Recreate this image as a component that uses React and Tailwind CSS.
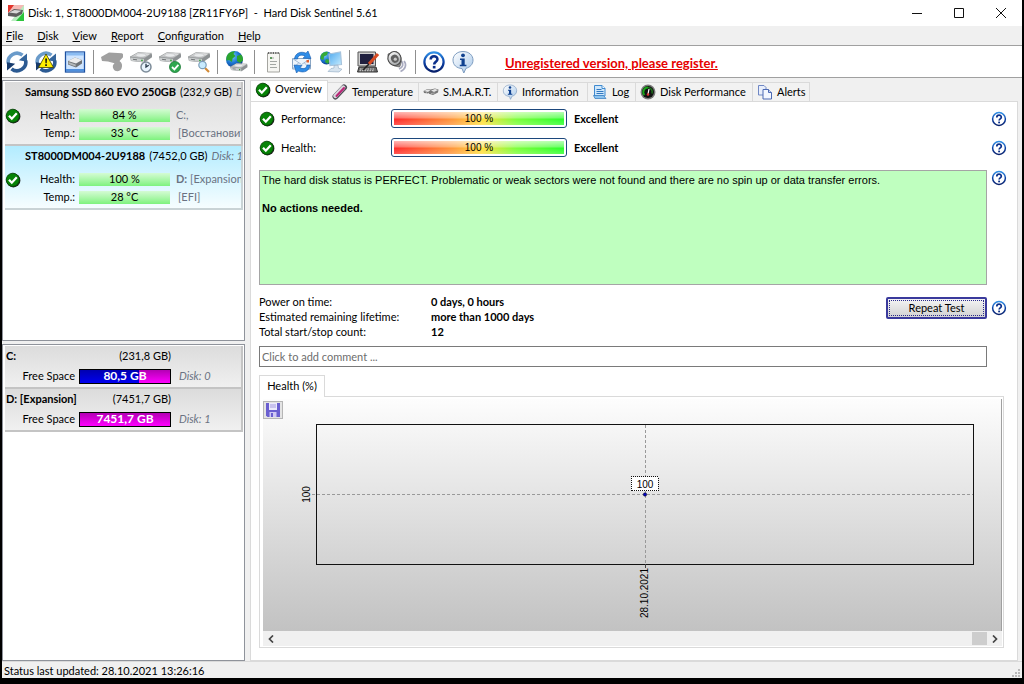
import React, { useState } from "react";

const GradientDefs = () => (
  <svg className="absolute h-0 w-0" aria-hidden="true">
    <defs>
      <linearGradient id="helpRing" x1="0" y1="0" x2="0" y2="1">
        <stop offset="0" stopColor="#2f8fe6" />
        <stop offset="0.5" stopColor="#0d43a8" />
        <stop offset="1" stopColor="#08206b" />
      </linearGradient>
      <linearGradient id="metal" x1="0" y1="0" x2="0" y2="1">
        <stop offset="0" stopColor="#f4f4f4" />
        <stop offset="1" stopColor="#a3a6a8" />
      </linearGradient>
      <radialGradient id="globe" cx="0.35" cy="0.3" r="0.8">
        <stop offset="0" stopColor="#7fd0ff" />
        <stop offset="0.5" stopColor="#1c77d2" />
        <stop offset="1" stopColor="#0a2f80" />
      </radialGradient>
      <linearGradient id="screen" x1="0" y1="0" x2="1" y2="1">
        <stop offset="0" stopColor="#4fa9ee" />
        <stop offset="1" stopColor="#c5ecff" />
      </linearGradient>
      <linearGradient id="balloon" x1="0" y1="0" x2="1" y2="1">
        <stop offset="0" stopColor="#ffffff" />
        <stop offset="1" stopColor="#a9c9ea" />
      </linearGradient>
    </defs>
  </svg>
);

const CheckIcon = () => (
  <svg viewBox="0 0 16 16" className="h-4 w-4 shrink-0">
    <circle cx="8.4" cy="8.4" r="7" fill="#222" />
    <circle cx="7.8" cy="7.8" r="6.600" fill="#078307" stroke="#043f04" strokeWidth="0.8" />
    <path d="M4 7.8l2.8 2.9 5-5.4" fill="none" stroke="#fff" strokeWidth="2.3" />
  </svg>
);

const HelpIcon = ({ className = "h-4 w-4" }) => (
  <svg viewBox="0 0 16 16" className={className}>
    <circle cx="8" cy="8" r="6.4" fill="#fff" stroke="url(#helpRing)" strokeWidth="1.5" />
    <path d="M5.8 6.4c0-3 4.5-2.9 4.5-.2 0 1.6-2.2 1.7-2.2 3.4" fill="none" stroke="#0b2f8a" strokeWidth="1.7" />
    <rect x="7.2" y="10.6" width="1.8" height="1.7" fill="#0b2f8a" />
  </svg>
);

const InfoIcon = ({ className = "h-6 w-6" }) => (
  <svg viewBox="0 0 24 24" className={className}>
    <path d="M12 1.5c6 0 10 3.8 10 8.6 0 4.4-3.2 7.3-7 8.2L12.8 23 11 18.5C5.5 18.2 2 14.9 2 10.1 2 5.300 6 1.500 12 1.500z" fill="url(#balloon)" stroke="#7d9cc0" strokeWidth="1" />
    <circle cx="12" cy="5.3" r="1.9" fill="#10418f" />
    <path d="M9 8.500h4.700v6.200h1.700v1.600H8.800v-1.600h1.700v-4.600H9z" fill="#10418f" />
  </svg>
);

const RefreshArrows = () => (
  <g>
    <path d="M3.300 13.500A8.800 8.800 0 0117.500 5.200" fill="none" stroke="#6a9bca" strokeWidth="3.600" />
    <path d="M22 3.500v8.200l-8.200-1.500z" fill="#34659c" />
    <path d="M20.700 10.500A8.800 8.800 0 016.500 18.800" fill="none" stroke="#2c5a92" strokeWidth="3.600" />
    <path d="M2 20.500v-8.200l8.200 1.500z" fill="#173b6d" />
  </g>
);

const RefreshIcon = () => (
  <svg viewBox="0 0 24 24" className="h-6 w-6"><RefreshArrows /></svg>
);

const WarningRefreshIcon = () => (
  <svg viewBox="0 0 24 24" className="h-6 w-6">
    <RefreshArrows />
    <path d="M12 4l7.500 13.500h-15z" fill="#ffee00" stroke="#3c3c00" strokeWidth="0.800" />
    <path d="M11.200 8.500h1.800l-.3 4.800h-1.200zM11.200 14.300h1.700V16h-1.700z" fill="#111" />
  </svg>
);

const DriveShape = () => (
  <g>
    <path d="M1 7l8-4.500 13 .8 1 1v3L15.500 12.500 2 11z" fill="#8d9193" />
    <path d="M1 7l8-4.500 13.500.8L15 8.700z" fill="url(#metal)" stroke="#909495" strokeWidth="0.500" />
    <ellipse cx="12" cy="5.300" rx="5" ry="1.800" fill="#e9ebec" stroke="#b2b5b7" strokeWidth="0.500" />
    <path d="M1.300 7.500l13.700 1.600v3.200L2 10.800z" fill="#c9cccd" />
    <path d="M4 9.300l4 .5" stroke="#6a6d6f" strokeWidth="0.900" />
    <rect x="12.200" y="9.700" width="1.500" height="1.500" fill="#2ca32c" />
  </g>
);

const DiskWindowIcon = () => (
  <svg viewBox="0 0 24 24" className="h-6 w-6">
    <rect x="2.500" y="2" width="19" height="20" fill="#cfe5ff" stroke="#1d50a0" strokeWidth="1.300" />
    <rect x="3" y="2.500" width="18" height="3" fill="#8bbcf2" />
    <path d="M3 19h18v2.500H3z" fill="#4f8fdc" />
    <path d="M5 11l7-3.500 7 2.500v3.500l-6 4-8-3z" fill="#6f7376" />
    <path d="M5 11l7-3.500 7 2.500-6 3.500z" fill="#ececec" />
    <path d="M5.500 12l7.200 2.500v2L5.500 14z" fill="#b4b8ba" />
  </svg>
);

const GrayToolIcon = () => (
  <svg viewBox="0 0 24 24" className="h-6 w-6">
    <path d="M1 7l8-4.500 13 .8 1 1v3l-3.500 3.700c2.600 1.500 3.200 4.500 2 7.500-1.500 3.500-6.500 3.500-8 .5-1.300-2.500-.7-4.200 1-5.700L8 11.500 2 11z" fill="#a0a0a0" />
  </svg>
);

const DriveClockIcon = () => (
  <svg viewBox="0 0 24 24" className="h-6 w-6">
    <DriveShape />
    <circle cx="17" cy="17" r="5" fill="#e9f4fd" stroke="#7d8c99" strokeWidth="1.500" />
    <path d="M17 13.800V17l2.700-1.700" fill="none" stroke="#234" strokeWidth="1.300" />
  </svg>
);

const DriveCheckIcon = () => (
  <svg viewBox="0 0 24 24" className="h-6 w-6">
    <DriveShape />
    <circle cx="17" cy="17" r="5.500" fill="#2fa84f" stroke="#1a7a35" strokeWidth="0.800" />
    <path d="M14 17l2.400 2.400 4-4.600" fill="none" stroke="#fff" strokeWidth="1.800" />
  </svg>
);

const DriveSearchIcon = () => (
  <svg viewBox="0 0 24 24" className="h-6 w-6">
    <DriveShape />
    <path d="M18 18l4 4" stroke="#d38a35" strokeWidth="2.200" />
    <circle cx="15.500" cy="15" r="3.700" fill="#c8ebff" stroke="#7b9db8" strokeWidth="1.200" />
  </svg>
);

const GlobeDriveIcon = () => (
  <svg viewBox="0 0 24 24" className="h-6 w-6">
    <circle cx="10.500" cy="9.500" r="8.500" fill="url(#globe)" />
    <path d="M4 4c2-2 5-3 7-2.700L9.500 4l2 2-3 2.500L8 12l-3-2-2.500.5C2 8 2.500 6 4 4zM13 6l4-1.500c1.500 1.500 2.200 4 2 6L16 13l-3-2z" fill="#2ba52e" />
    <g transform="translate(5.500 11.500) scale(.78)"><DriveShape /></g>
  </svg>
);

const NotepadIcon = () => (
  <svg viewBox="0 0 24 24" className="h-6 w-6">
    <path d="M6.500 3h12v19h-12z" fill="#f6f6f2" stroke="#a5a5a0" />
    <path d="M7 3h11.500" stroke="#666" strokeWidth="2" strokeDasharray="1.200 1.200" />
    <path d="M9 8h4M9 11.500h7M9 14.500h6M9 17.500h7" stroke="#a3a7a3" strokeWidth="1" />
    <path d="M9 8h2" stroke="#3b8a3b" strokeWidth="1.400" />
  </svg>
);

const MailIcon = () => (
  <svg viewBox="0 0 24 24" className="h-6 w-6">
    <path d="M2.500 8.500h18V19h-18z" fill="#eef5fc" stroke="#7f9dbd" strokeWidth="0.900" />
    <path d="M2.500 8.500l9 6 9-6M2.500 19l6-6M20.500 19l-6-6" fill="none" stroke="#a3bad3" />
    <rect x="16.500" y="10" width="2.500" height="2.500" fill="#e2602e" />
    <path d="M4.500 9C5 3 11 .8 16 3.200L18 1l3 7.500-8-.3 2-2C11.500 4.300 8 5 7.500 9z" fill="#2f8de8" stroke="#1559ab" strokeWidth="0.600" />
    <path d="M20 15c-.5 6-6 8.500-11.500 6L6.500 23l-2.500-8 8 .5-2 2c3 2 6.500 1.300 7-2.500z" fill="#2f8de8" stroke="#1559ab" strokeWidth="0.600" />
  </svg>
);

const NetworkIcon = () => (
  <svg viewBox="0 0 24 24" className="h-6 w-6">
    <circle cx="7.500" cy="8" r="6.500" fill="url(#globe)" />
    <path d="M2 5c2-3 5-3.700 7-3l-1 3-3 1.500L4.500 10 1.500 9zM7 9l4 1-2 4-3-2z" fill="#35aa38" />
    <path d="M10 4L21.500 2l1 12.500-11.500 1z" fill="url(#screen)" stroke="#a7c3dc" strokeWidth="1.200" />
    <path d="M15 15.500l4-.3.500 3 3.500 1-3 2.800-11-.5 3-3 3-.500z" fill="#d6e3ee" stroke="#8faac2" strokeWidth="0.600" />
  </svg>
);

const MonitorToolIcon = () => (
  <svg viewBox="0 0 24 24" className="h-6 w-6">
    <path d="M2 2h17.500v14H2z" fill="#cfcfcf" stroke="#555" />
    <path d="M4 4h13.500v10H4z" fill="#20203f" />
    <path d="M3 17h17l1.500 5H1.500z" fill="#6c6c6c" stroke="#333" />
    <path d="M4 19h14M3.500 20.700h15" stroke="#d2d2d2" strokeDasharray="1.500 1" />
    <path d="M22 4l-9 10" stroke="#d74b23" strokeWidth="3.200" />
    <path d="M13 14l-6 6" stroke="#222" strokeWidth="1.600" />
  </svg>
);

const SpeakerIcon = () => (
  <svg viewBox="0 0 24 24" className="h-6 w-6">
    <path d="M19 11c3 3.500 1.500 8.500-3.500 10.500M16.500 11c2.500 3 1.500 6.500-2.500 8" fill="none" stroke="#a9abc0" strokeWidth="1.700" />
    <path d="M3 4L11 1.500c5 2 7 10 3.500 15.500l-5-1-6-5z" fill="#8a8a8a" stroke="#5c5c5c" strokeWidth="0.700" />
    <ellipse cx="9.500" cy="8.500" rx="6.500" ry="7" transform="rotate(-25 9.500 8.500)" fill="url(#metal)" stroke="#4c4c4c" strokeWidth="1.100" />
    <ellipse cx="9.800" cy="8.700" rx="3.800" ry="4.200" transform="rotate(-25 9.800 8.700)" fill="#5f5f5f" />
    <circle cx="10.300" cy="9.200" r="1.600" fill="#c9c9c9" />
  </svg>
);

const AppIcon = () => (
  <svg viewBox="0 0 16 16" className="h-4 w-4">
    <path d="M0 0h16v3L0 10z" fill="#f4b9b4" />
    <path d="M0 0h6L0 8z" fill="#e2342b" />
    <path d="M16 0v16H3z" fill="#b9ecc0" />
    <path d="M16 7v9H8z" fill="#2bc43c" />
    <path d="M0 8l6-4 9 1-1 4-6 3-8-1z" fill="#5e5e5e" />
    <path d="M1 7.500L6.500 5l7 .7-5 2.800z" fill="#d9d9d9" />
  </svg>
);

const TemperatureIcon = () => (
  <svg viewBox="0 0 16 16" className="h-4 w-4">
    <path d="M3.500 12.500L12 3.500" stroke="#4f4f57" strokeWidth="6" strokeLinecap="round" />
    <path d="M3.300 12L11.300 3.500" stroke="#d9d6dc" strokeWidth="4.200" strokeLinecap="round" />
    <path d="M4.500 12L12 4" stroke="#bb2377" strokeWidth="2" strokeLinecap="round" />
  </svg>
);

const SmartIcon = () => (
  <svg viewBox="0 0 16 16" className="h-4 w-4">
    <path d="M.5 7l4-2 3 .5L12 4.500l3.500 1-.5 3-5 2.500-5-1.500L1 9z" fill="#777" />
    <path d="M1 7l3.500-1.500 3 .5L5 8zM8 6.500l4-1.500 3 1L11 8z" fill="#e5e5e5" />
    <path d="M3 9l3 .5M8.500 9.500l3-.5" stroke="#ddd" strokeDasharray="1 1" />
  </svg>
);

const LogIcon = () => (
  <svg viewBox="0 0 16 16" className="h-4 w-4">
    <path d="M2.500 1.500H10l3 3V12h-10.500z" fill="#cfe7fb" stroke="#3f8ad0" />
    <path d="M10 1.500v3h3" fill="#fff" stroke="#3f8ad0" />
    <path d="M4.500 5.500h5M4.500 7.500h7M4.500 9.500h7" stroke="#3178c0" />
    <path d="M1.500 11.500h10l2.500 3h-11z" fill="#8cc3ef" stroke="#2f78bd" strokeWidth="0.700" />
  </svg>
);

const GaugeIcon = () => (
  <svg viewBox="0 0 16 16" className="h-4 w-4">
    <circle cx="8" cy="8" r="7.500" fill="#7a7a7a" />
    <circle cx="8" cy="8" r="6" fill="#111" />
    <path d="M4.500 11A4.500 4.500 0 018 3.500" fill="none" stroke="#19a519" strokeWidth="2" />
    <path d="M8 3.500a4.500 4.500 0 014 6" fill="none" stroke="#1c6f1c" strokeWidth="1.600" />
    <path d="M8 10l1-5" stroke="#fff" strokeWidth="1.200" />
    <circle cx="8" cy="10.500" r="1.300" fill="#d33" />
  </svg>
);

const AlertsIcon = () => (
  <svg viewBox="0 0 16 16" className="h-4 w-4">
    <path d="M1.500 1.500H7l2 2V11H1.500z" fill="#e8eefb" stroke="#6f87c4" />
    <path d="M6 5.500h5.500l3 3V15H6z" fill="#f2f6ff" stroke="#4b68b3" />
    <path d="M11.500 5.500v3h3" fill="#c8d6f4" stroke="#4b68b3" />
  </svg>
);

const SaveIcon = () => (
  <svg viewBox="0 0 16 16" className="h-4 w-4">
    <path d="M1 1h14v14H2.500L1 13.500z" fill="#6a5fd0" />
    <path d="M4 1h8v7H4z" fill="#eceafc" />
    <path d="M5 3h6M5 5h6" stroke="#a59be0" />
    <path d="M4.500 10h7v5h-7z" fill="#cfc8f4" />
    <path d="M6 11h2v4H6z" fill="#6a5fd0" />
  </svg>
);

const TOOL_GROUPS = [
  [["Refresh", RefreshIcon], ["Detect problems", WarningRefreshIcon], ["Disk window", DiskWindowIcon]],
  [["Surface test", GrayToolIcon], ["Short self test", DriveClockIcon], ["Extended self test", DriveCheckIcon], ["Analyse disk", DriveSearchIcon]],
  [["Online disk info", GlobeDriveIcon]],
  [["Report", NotepadIcon], ["Send report", MailIcon], ["Network", NetworkIcon]],
  [["Configuration", MonitorToolIcon], ["Acoustic management", SpeakerIcon]],
];

const TABS = [
  { label: "Temperature", icon: TemperatureIcon, width: "w-[91px]" },
  { label: "S.M.A.R.T.", icon: SmartIcon, width: "w-[79px]" },
  { label: "Information", icon: () => <InfoIcon className="h-4 w-4" />, width: "w-[90px]" },
  { label: "Log", icon: LogIcon, width: "w-12" },
  { label: "Disk Performance", icon: GaugeIcon, width: "w-[117px]" },
  { label: "Alerts", icon: AlertsIcon, width: "w-[57px]" },
];

const DISKS = [
  { name: "Samsung SSD 860 EVO 250GB", size: "(232,9 GB)", disk: "Disk: 0", health: "84 %", temp: "33 °C", letter: "C:,", volume: "", extra: "[Восстановить]", selected: false },
  { name: "ST8000DM004-2U9188", size: "(7452,0 GB)", disk: "Disk: 1", health: "100 %", temp: "28 °C", letter: "D:", volume: "[Expansion]", extra: "[EFI]", selected: true },
];

const DRIVES = [
  { name: "C:", size: "(231,8 GB)", free: "80,5 GB", used: 65, disk: "Disk: 0" },
  { name: "D: [Expansion]", size: "(7451,7 GB)", free: "7451,7 GB", used: 0, disk: "Disk: 1" },
];

const TitleBar = () => (
  <header className="flex h-[26px] shrink-0 items-center bg-white pl-1.5">
    <AppIcon />
    <h1 className="ml-1 flex-1 whitespace-pre">Disk: 1, ST8000DM004-2U9188 [ZR11FY6P]  -  Hard Disk Sentinel 5.61</h1>
    <button aria-label="Minimize" className="flex h-6 w-[42px] items-center justify-center">
      <svg viewBox="0 0 10 10" className="h-2.5 w-2.5"><path d="M0 5.500h10" stroke="#111" /></svg>
    </button>
    <button aria-label="Maximize" className="flex h-6 w-[42px] items-center justify-center">
      <svg viewBox="0 0 10 10" className="h-2.5 w-2.5"><path d="M.5.5h9v9h-9z" fill="none" stroke="#111" /></svg>
    </button>
    <button aria-label="Close" className="flex h-6 w-[42px] items-center justify-center">
      <svg viewBox="0 0 10 10" className="h-2.5 w-2.5"><path d="M0 0l10 10M10 0L0 10" stroke="#111" /></svg>
    </button>
  </header>
);

const MenuBar = () => (
  <nav className="flex h-[19px] shrink-0 items-center gap-3.5 pt-0.5 pl-1">
    {["File", "Disk", "View", "Report", "Configuration", "Help"].map((item) => (
      <button key={item} type="button">
        <u>{item[0]}</u>{item.slice(1)}
      </button>
    ))}
  </nav>
);

const ToolButton = ({ label, children }) => (
  <button type="button" aria-label={label} className="flex h-7 w-[29px] items-center justify-center">
    {children}
  </button>
);

const ToolSeparator = () => (
  <div className="flex w-2 justify-center"><div className="h-6 w-px bg-[#8f8f8f]" /></div>
);

const Toolbar = () => (
  <div className="flex h-[33px] shrink-0 items-center border-y border-[#a0a0a0] bg-white">
    {TOOL_GROUPS.map((group, i) => (
      <React.Fragment key={i}>
        {group.map(([label, Icon]) => (
          <ToolButton key={label} label={label}><Icon /></ToolButton>
        ))}
        <ToolSeparator />
      </React.Fragment>
    ))}
    <ToolButton label="Help"><HelpIcon className="h-6 w-6" /></ToolButton>
    <ToolButton label="About"><InfoIcon /></ToolButton>
    <a href="#register" className="mt-1 ml-7 text-[13px] font-bold text-[#e60000] underline">
      Unregistered version, please register.
    </a>
  </div>
);

const Meter = ({ value }) => (
  <div className="flex h-[13px] w-[91px] items-center justify-center bg-linear-to-b from-[#d4fbd4] to-[#7df27d]">{value}</div>
);

const DiskItem = ({ disk }) => (
  <li
    className={
      disk.selected
        ? "h-16 overflow-hidden border-r-2 border-b-2 border-[#c9d3d6] bg-linear-to-b from-[#b2ecff] to-[#f6fdff]"
        : "h-16 overflow-hidden border-r-2 border-b-2 border-[#c4c4c4] bg-linear-to-b from-[#dcdcdc] to-[#efefef]"
    }
  >
    <div className="flex h-5 items-center gap-1 pl-5 whitespace-nowrap">
      <b className="font-bold">{disk.name}</b>
      <span>{disk.size}</span>
      <i className="text-gray-500">{disk.disk}</i>
    </div>
    <div className="mt-1 flex items-start">
      <div className="mt-0.5 w-[18px]"><CheckIcon /></div>
      <dl className="grid grid-cols-[54px_91px] items-center gap-x-1 text-right leading-[18px]">
        <dt>Health:</dt>
        <dd><Meter value={disk.health} /></dd>
        <dt>Temp.:</dt>
        <dd><Meter value={disk.temp} /></dd>
      </dl>
      <div className="ml-1.5 leading-[18px] whitespace-nowrap text-gray-500">
        <div><b className={disk.selected ? "font-bold" : "font-normal"}>{disk.letter}</b> {disk.volume}</div>
        <div className="pl-0.5">{disk.extra}</div>
      </div>
    </div>
  </li>
);

const DriveItem = ({ drive }) => (
  <li className="h-[43px] border-r-2 border-b-2 border-[#c4c4c4] bg-linear-to-b from-[#dcdcdc] to-[#f0f0f0]">
    <div className="flex h-5 w-[166px] items-center justify-between pl-px">
      <b className="font-bold">{drive.name}</b>
      <span>{drive.size}</span>
    </div>
    <div className="flex h-5 items-center">
      <span className="w-[70px] text-right">Free Space</span>
      <div className="relative ml-1 h-[15px] w-[92px] border border-black bg-linear-to-b from-[#b400b4] to-[#ff00ff]">
        <div className="h-full bg-linear-to-b from-[#0000b0] to-[#0000f0]" style={{ width: `${drive.used}%` }} />
        <span className="absolute inset-0 flex items-center justify-center text-xs font-bold text-white">{drive.free}</span>
      </div>
      <i className="ml-2 text-gray-500">{drive.disk}</i>
    </div>
  </li>
);

const Sidebar = () => (
  <aside className="flex w-[243px] shrink-0 flex-col gap-[3px]">
    <ul className="h-[261px] shrink-0 border border-[#8f939b] bg-white py-px pr-px pl-0.5">
      {DISKS.map((disk) => <DiskItem key={disk.name} disk={disk} />)}
    </ul>
    <ul className="flex-1 border border-[#8f939b] bg-white py-px pr-px pl-0.5">
      {DRIVES.map((drive) => <DriveItem key={drive.name} drive={drive} />)}
    </ul>
  </aside>
);

const TabBar = () => (
  <div role="tablist" className="flex h-[21px] shrink-0 items-end">
    <button role="tab" aria-selected="true" className="-mb-px flex h-[22px] w-[78px] items-center gap-1 border border-b-0 border-[#dadada] bg-white pb-1 pl-1">
      <CheckIcon />Overview
    </button>
    {TABS.map(({ label, icon: Icon, width }) => (
      <button key={label} role="tab" aria-selected="false" className={`${width} flex h-[19px] items-center gap-1 border-t border-r border-[#dadada] bg-[#f2f2f2] pl-1 whitespace-nowrap`}>
        <Icon />{label}
      </button>
    ))}
  </div>
);

const HelpButton = () => (
  <button type="button" aria-label="Help" className="h-4 w-4 shrink-0"><HelpIcon /></button>
);

const ScoreRow = ({ label }) => (
  <div className="flex h-[19px] items-center">
    <CheckIcon />
    <span className="ml-1.5 w-[110px] pt-px">{label}</span>
    <div className="h-[19px] w-44 rounded-[3px] border border-[#1c477c] bg-white p-0.5">
      <div className="h-full bg-[linear-gradient(to_bottom,rgba(255,255,255,0.65),rgba(255,255,255,0.3)_45%,transparent_55%,rgba(255,255,255,0.2)),linear-gradient(to_right,#ff2a2a,#ff9a3c_35%,#ffe040_52%,#7dff3c_72%,#2bff2b)] text-center font-['Liberation_Sans',sans-serif] text-[10px] leading-[13px]">
        100 %
      </div>
    </div>
    <b className="ml-[7px] flex-1 pt-px font-bold">Excellent</b>
    <HelpButton />
  </div>
);

const STATS = [
  ["Power on time:", "0 days, 0 hours"],
  ["Estimated remaining lifetime:", "more than 1000 days"],
  ["Total start/stop count:", "12"],
];

const HealthChart = () => (
  <div className="relative flex min-h-0 flex-1 flex-col border-r border-[#a0a0a0] bg-linear-to-b from-[#fdfdfd] to-[#c2c2c2]">
    <button type="button" aria-label="Save chart" className="absolute top-0.5 left-0 flex h-[18px] w-5 items-center justify-center border border-[#b5b5b5] bg-[#e4e4e4]">
      <SaveIcon />
    </button>
    <div className="mt-[25px] mr-[27px] mb-[66px] ml-[53px] min-h-0 flex-1 border border-[#111]">
      <svg className="block h-full w-full overflow-visible font-['Liberation_Sans',sans-serif] text-[10px]">
        <line x1="-5" x2="100%" y1="50%" y2="50%" stroke="#999" strokeDasharray="3 2" shapeRendering="crispEdges" />
        <line x1="50%" x2="50%" y1="0" y2="100%" stroke="#999" strokeDasharray="3 2" shapeRendering="crispEdges" />
        <svg x="0" y="50%" className="overflow-visible">
          <text transform="translate(-7 0) rotate(-90)" textAnchor="middle">100</text>
        </svg>
        <svg x="50%" y="100%" className="overflow-visible">
          <path d="M0 0v4" stroke="#444" shapeRendering="crispEdges" />
          <text transform="translate(3 4) rotate(-90)" textAnchor="end">28.10.2021</text>
        </svg>
        <svg x="50%" y="50%" className="overflow-visible">
          <rect x="-14" y="-18" width="27" height="14" fill="#fff" stroke="#111" strokeDasharray="1 1" shapeRendering="crispEdges" />
          <text x="0" y="-7" textAnchor="middle">100</text>
          <circle cx="0" cy="0" r="1.700" fill="#0000c8" stroke="#000" strokeWidth="0.500" />
        </svg>
      </svg>
    </div>
  </div>
);

const ScrollBar = () => (
  <div className="flex h-[15px] shrink-0 items-center bg-[#f0f0f0]">
    <button type="button" aria-label="Scroll left" className="flex w-[15px] justify-center">
      <svg viewBox="0 0 8 8" className="h-2 w-2"><path d="M6 .5L2.500 4 6 7.500" fill="none" stroke="#444" strokeWidth="1.700" /></svg>
    </button>
    <div className="flex h-full flex-1 justify-end py-px"><div className="w-[15px] bg-[#cdcdcd]" /></div>
    <button type="button" aria-label="Scroll right" className="flex w-[15px] justify-center">
      <svg viewBox="0 0 8 8" className="h-2 w-2"><path d="M2 .5L5.500 4 2 7.500" fill="none" stroke="#444" strokeWidth="1.700" /></svg>
    </button>
  </div>
);

const Overview = () => {
  const [comment, setComment] = useState("");
  return (
    <section className="flex min-h-0 flex-1 flex-col border border-[#dadada] bg-white pt-[7px] pr-2.5 pb-3 pl-2">
      <div className="flex flex-col gap-2.5">
        <ScoreRow label="Performance:" />
        <ScoreRow label="Health:" />
      </div>
      <div className="mt-[13px] flex gap-1">
        <div className="h-[115px] flex-1 border border-[#a5a5a5] bg-[#bfffbf] px-0.5 pt-0.5 font-['Liberation_Sans',sans-serif] leading-[14px]">
          <p>The hard disk status is PERFECT. Problematic or weak sectors were not found and there are no spin up or data transfer errors.</p>
          <p className="mt-3.5 font-bold">No actions needed.</p>
        </div>
        <HelpButton />
      </div>
      <div className="mt-[9px] flex items-start">
        <dl className="grid flex-1 grid-cols-[172px_1fr] leading-[15px]">
          {STATS.map(([name, value]) => (
            <React.Fragment key={name}>
              <dt>{name}</dt>
              <dd className="font-bold">{value}</dd>
            </React.Fragment>
          ))}
        </dl>
        <div className="mt-[3px] flex items-center gap-1">
          <button type="button" className="h-[22px] w-[101px] rounded-xs border-2 border-[#3a3a9c] bg-linear-to-b from-[#f4f4f4] to-[#d2d2d2] p-px">
            <span className="block h-full border border-dotted border-[#2a2a8c] leading-[14px]">Repeat Test</span>
          </button>
          <HelpButton />
        </div>
      </div>
      <input
        type="text"
        aria-label="Comment"
        value={comment}
        onChange={(e) => setComment(e.target.value)}
        placeholder="Click to add comment ..."
        className="mt-[7px] mr-5 h-[21px] shrink-0 border border-[#7a7a7a] px-0.5 placeholder:text-[#6d6d6d] focus:outline-none"
      />
      <div role="tablist" className="mt-2 flex h-[21px] shrink-0">
        <button role="tab" aria-selected="true" className="z-10 -mb-px w-[66px] border border-b-0 border-[#dadada] bg-white">Health (%)</button>
      </div>
      <div className="mr-[3px] flex min-h-0 flex-1 flex-col border border-[#dadada] pt-0.5 pr-px pb-px pl-[3px]">
        <HealthChart />
        <ScrollBar />
      </div>
    </section>
  );
};

const StatusBar = () => (
  <footer className="flex h-[17px] shrink-0 items-center justify-between border-t border-[#dadada] pl-0.5">
    <span className="pt-0.5">Status last updated: 28.10.2021 13:26:16</span>
    <svg viewBox="0 0 10 10" className="h-2.5 w-2.5 self-end">
      <path d="M6 1h2v2H6zM3 4h2v2H3zM6 4h2v2H6zM0 7h2v2H0zM3 7h2v2H3zM6 7h2v2H6z" fill="#b8b8b8" />
    </svg>
  </footer>
);

const App = () => {
  return (
    <div className="h-screen min-h-[560px] bg-black pr-0.5 pb-1.5 pl-0.5 font-['Lato','Open_Sans',sans-serif] text-[11px] text-black">
      <GradientDefs />
      <div className="flex h-full flex-col bg-[#f0f0f0]">
        <TitleBar />
        <MenuBar />
        <Toolbar />
        <main className="flex min-h-0 flex-1 gap-[5px] pt-0.5">
          <Sidebar />
          <div className="flex min-w-0 flex-1 flex-col pr-1">
            <TabBar />
            <Overview />
          </div>
        </main>
        <StatusBar />
      </div>
    </div>
  );
};

export default App;
